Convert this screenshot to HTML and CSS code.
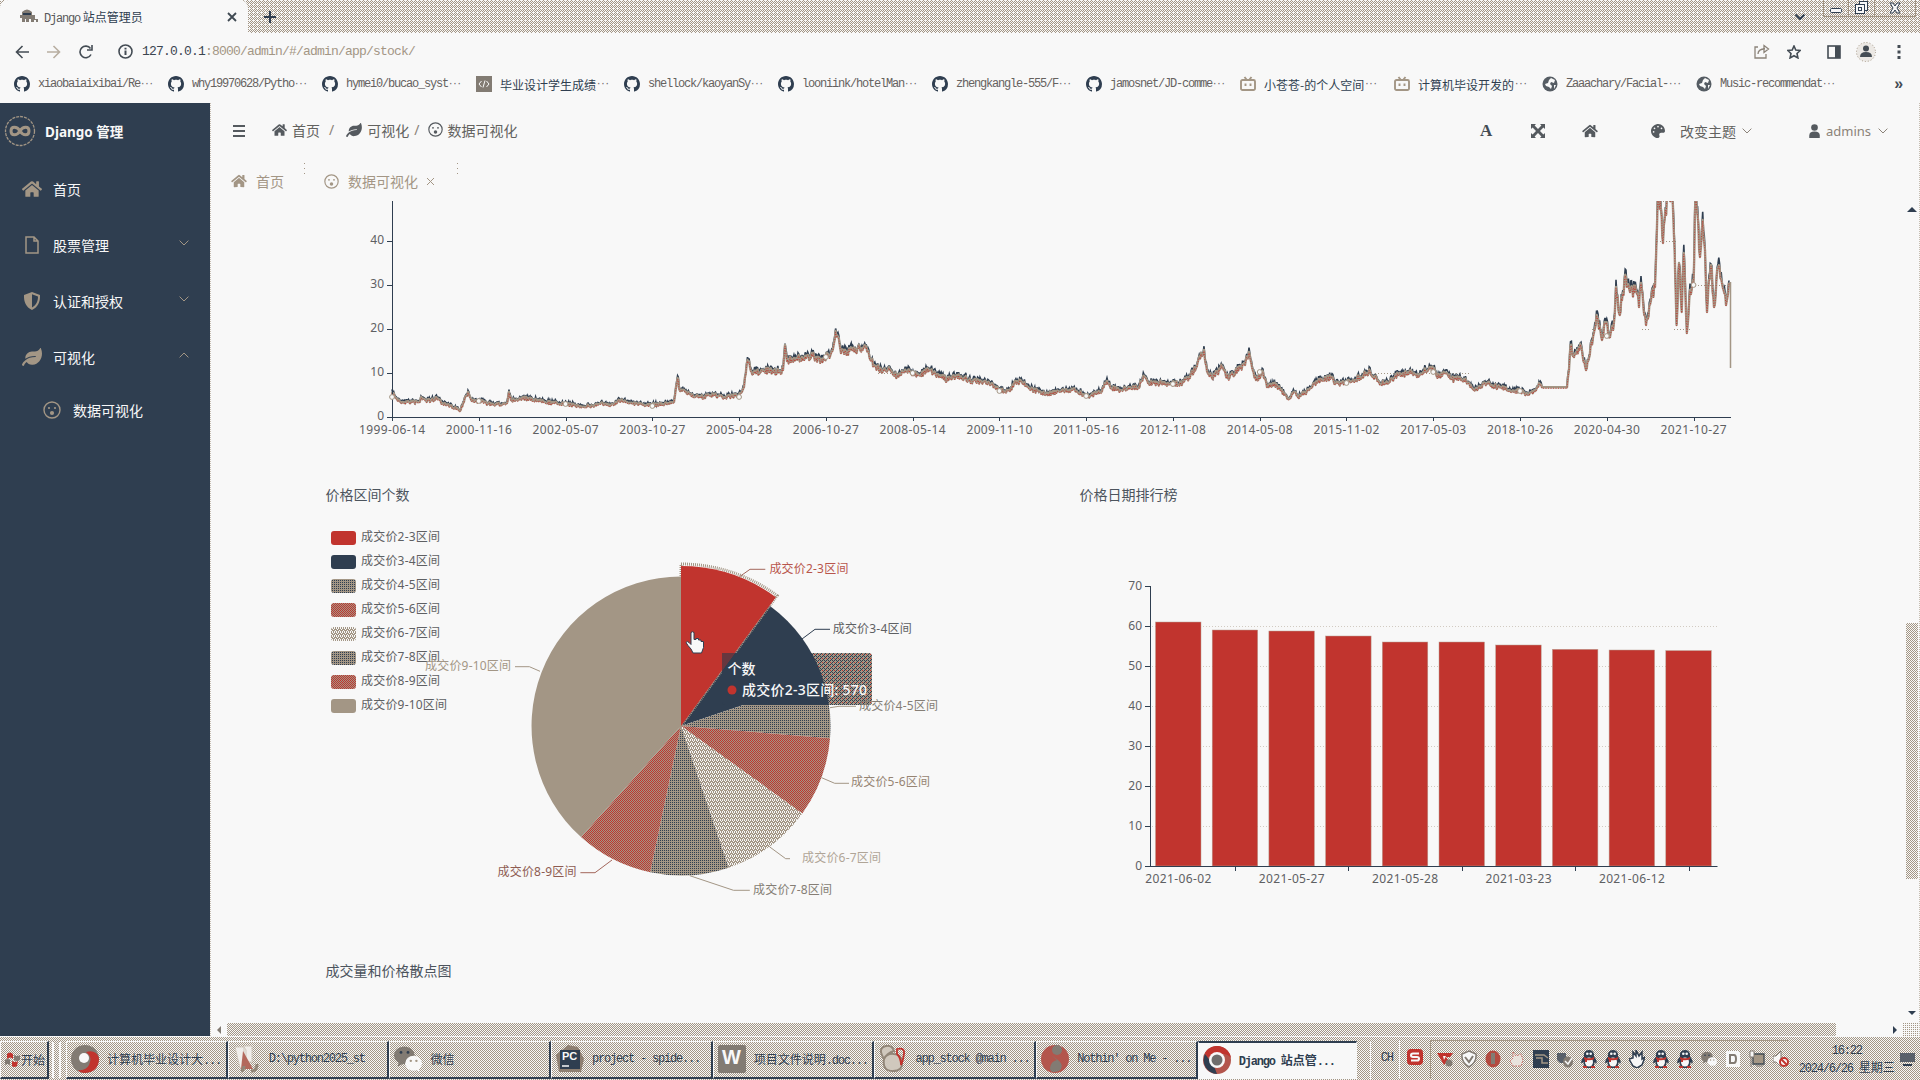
FILE: index.html
```html
<!DOCTYPE html>
<html lang="zh-CN">
<head>
<meta charset="utf-8">
<title>Django 站点管理员</title>
<link rel="stylesheet" href="styles.css">
</head>
<body>
<svg class="defs" width="0" height="0">
  <symbol id="home" viewBox="0 0 576 512"><path d="M280.37 148.26L96 300.11V464a16 16 0 0 0 16 16l112.06-.29a16 16 0 0 0 15.92-16V368a16 16 0 0 1 16-16h64a16 16 0 0 1 16 16v95.64a16 16 0 0 0 16 16.05L464 480a16 16 0 0 0 16-16V300L295.67 148.26a12.19 12.19 0 0 0-15.3 0zM571.6 251.47L488 182.56V44.05a12 12 0 0 0-12-12h-56a12 12 0 0 0-12 12v72.61L318.47 43a48 48 0 0 0-61 0L4.34 251.47a12 12 0 0 0-1.6 16.9l25.5 31A12 12 0 0 0 45.15 301l235.22-193.74a12.19 12.19 0 0 1 15.3 0L530.9 301a12 12 0 0 0 16.9-1.6l25.5-31a12 12 0 0 0-1.7-16.93z"/></symbol>
  <symbol id="leaf" viewBox="0 0 576 512"><path d="M546.2 9.7c-5.6-12.5-21.6-13-28.3-1.2C486.9 62.4 431.4 96 368 96h-80C182 96 96 182 96 288c0 7 .8 13.7 1.5 20.5C161.3 262.8 253.4 224 384 224c8.8 0 16 7.2 16 16s-7.2 16-16 16C132.6 256 26 410.1 2.4 468c-6.6 16.3 1.2 34.9 17.5 41.6 16.4 6.8 35-1.1 41.8-17.3 1.5-3.6 20.9-47.9 71.9-90.6 32.4 43.9 94 85.8 174.9 77.2C465.5 467.5 576 326.7 576 154.3c0-50.2-10.8-102.2-29.8-144.6z"/></symbol>
  <symbol id="palette" viewBox="0 0 512 512"><path d="M204.3 5C104.9 24.4 24.8 104.3 5.2 203.4c-37 187 131.7 326.4 258.8 306.7 41.2-6.4 61.4-54.6 42.5-91.7-23.1-45.4 9.9-98.4 60.9-98.4h79.7c35.8 0 64.8-29.6 64.9-65.3C511.5 97.1 368.1-26.9 204.3 5zM96 320c-17.7 0-32-14.3-32-32s14.3-32 32-32 32 14.3 32 32-14.3 32-32 32zm32-128c-17.7 0-32-14.3-32-32s14.3-32 32-32 32 14.3 32 32-14.3 32-32 32zm128-64c-17.7 0-32-14.3-32-32s14.3-32 32-32 32 14.3 32 32-14.3 32-32 32zm128 64c-17.7 0-32-14.3-32-32s14.3-32 32-32 32 14.3 32 32-14.3 32-32 32z"/></symbol>
  <symbol id="face" viewBox="0 0 18 18"><circle cx="9" cy="9" r="8" fill="none" stroke="currentColor" stroke-width="1.4"/><circle cx="6" cy="7" r="1.1"/><circle cx="12" cy="7" r="1.1"/><circle cx="9" cy="12" r="2.1"/></symbol>
  <symbol id="file" viewBox="0 0 14 18"><path d="M1 1h8l4 4v12H1zM9 1v4h4" fill="none" stroke="currentColor" stroke-width="1.5"/></symbol>
  <symbol id="shield" viewBox="0 0 18 18"><path fill-rule="evenodd" d="M9 0l8 3c.3 7-2 12-8 15C3 15 .7 10 1 3zM9 2.3v13.2c4.2-2.2 6-6 6-11z"/></symbol>
  <symbol id="down" viewBox="0 0 10 6"><path d="M.6 .6L5 5L9.4 .6" fill="none" stroke="currentColor"/></symbol>
  <symbol id="up" viewBox="0 0 10 6"><path d="M.6 5.4L5 1L9.4 5.4" fill="none" stroke="currentColor"/></symbol>
  <symbol id="github" viewBox="0 0 16 16"><path d="M8 0C3.58 0 0 3.58 0 8c0 3.54 2.29 6.53 5.47 7.59.4.07.55-.17.55-.38 0-.19-.01-.82-.01-1.49-2.01.37-2.53-.49-2.69-.94-.09-.23-.48-.94-.82-1.13-.28-.15-.68-.52-.01-.53.63-.01 1.08.58 1.23.82.72 1.21 1.87.87 2.33.66.07-.52.28-.87.51-1.07-1.78-.2-3.64-.89-3.64-3.95 0-.87.31-1.59.82-2.15-.08-.2-.36-1.02.08-2.12 0 0 .67-.21 2.2.82.64-.18 1.32-.27 2-.27s1.36.09 2 .27c1.53-1.04 2.2-.82 2.2-.82.44 1.1.16 1.92.08 2.12.51.56.82 1.27.82 2.15 0 3.07-1.87 3.75-3.65 3.95.29.25.54.73.54 1.48 0 1.07-.01 1.93-.01 2.2 0 .21.15.46.55.38A8.01 8.01 0 0 0 16 8c0-4.42-3.58-8-8-8z"/></symbol>
  <symbol id="bili" viewBox="0 0 16 16"><path d="M4.5 1l2 2.5m5-2.5l-2 2.500M2.500 4h11A1.500 1.500 0 0 1 15 5.500v7a1.500 1.500 0 0 1-1.500 1.500h-11A1.500 1.500 0 0 1 1 12.500v-7A1.500 1.500 0 0 1 2.500 4zM5.500 7.500v2.500m5-2.500v2.500" fill="none" stroke="#a39685" stroke-width="1.900"/></symbol>
  <symbol id="globe" viewBox="0 0 16 16"><circle cx="8" cy="8" r="7.500" fill="#555c63"/><path d="M9 2l4 2-1 3-3-1-1 2 2 2-1 3-2-2-3-1-1-2 3-1 1-3zM12 9l2 0-2 4z" fill="#f8f8f8"/></symbol>
  <symbol id="code" viewBox="0 0 16 16"><path d="M0 0h16v16H0z" fill="#827b73"/><path d="M5.500 5L3 8l2.500 3M10.500 5L13 8l-2.500 3M9 4.500l-2 7" fill="none" stroke="#f8f8f8"/></symbol>
  <symbol id="user" viewBox="0 0 14 16"><circle cx="7" cy="4" r="3.800"/><path d="M1 16v-3c0-3 2-4.500 6-4.500s6 1.500 6 4.500v3z"/></symbol>
  <symbol id="qq" viewBox="0 0 16 18"><path d="M8 0c4 0 5.500 3 5 6.500 3 3.500 3 6 2.400 7L13.500 12c0 3-1 4-1 4l1 2h-11l1-2s-1-1-1-4L.6 13.500C0 12.500 0 10 3 6.500 2.500 3 4 0 8 0z" fill="#2f3e50"/><ellipse cx="8" cy="12" rx="4" ry="4.500" fill="#f8f8f8"/><circle cx="6.300" cy="3.800" r="1.300" fill="#f8f8f8"/><circle cx="9.700" cy="3.800" r="1.300" fill="#f8f8f8"/><path d="M3 7q5 2.500 10 0v2.200q-5 2.300-10 0zM4 9h2v3H4zM2 16h4v2H2zM10 16h4v2h-4z" fill="#c1342e"/></symbol>
  <symbol id="wechat" viewBox="0 0 30 28"><ellipse cx="11" cy="10" rx="11" ry="9.500" fill="#827b73"/><circle cx="7.500" cy="7" r="1.500" fill="#2f3e50"/><circle cx="15" cy="7" r="1.500" fill="#2f3e50"/><path d="M5 17l-1 5 6-3" fill="#827b73"/><ellipse cx="21" cy="18.500" rx="9" ry="8" fill="#f8f8f8"/><circle cx="18" cy="16" r="1.300" fill="#a39685"/><circle cx="24" cy="16" r="1.300" fill="#a39685"/><path d="M24 25l3 3v-5" fill="#f8f8f8"/></symbol>
</svg>

<header class="tabstrip">
  <div class="browser-tab">
    <svg width="18" height="16" viewBox="0 0 18 16"><path d="M2 3q5-5 10 0v3h3v4h3v3h-2v-2h-2v2h-3v-3H9v3H6v-3H5v3H2V9H0V6h2z" fill="#827b73"/><path d="M3 4h8v2H3z" fill="#2f3e50"/></svg>
    <span class="song"><i>Django</i> 站点管理员</span>
    <svg class="tab-x" width="10" height="10" viewBox="0 0 10 10"><path d="M1 1l8 8M9 1L1 9" stroke="#3f4952" stroke-width="1.800"/></svg>
  </div>
  <svg class="plus" width="12" height="12" viewBox="0 0 12 12"><path d="M6 0v12M0 6h12" stroke="#2f3e50" stroke-width="2"/></svg>
  <svg class="tab-menu" width="10" height="6"><use href="#down" stroke-width="2"/></svg>
  <div class="win"><span><svg width="12" height="10"><rect x=".5" y="5.500" width="11" height="4" rx="1"/></svg></span><span><svg width="14" height="14"><rect x="4.500" y=".5" width="8" height="9"/><rect x=".5" y="3.500" width="9" height="9"/><rect x="3.500" y="6.500" width="3" height="3"/></svg></span><span><svg width="12" height="12"><path d="M1 1h3l2 3 2-3h3L8 6l3 5H8L6 8l-2 3H1l3-5z"/></svg></span></div>
</header>

<div class="urlbar">
  <svg width="14" height="14" viewBox="0 0 14 14"><path d="M14 7H2M7.500 1L1.500 7l6 6"/></svg>
  <svg class="dim" width="14" height="14" viewBox="0 0 14 14"><path d="M0 7h12M6.500 1l6 6-6 6"/></svg>
  <svg width="14" height="14" viewBox="0 0 14 14"><path d="M12 9.500A5.800 5.800 0 1 1 11.500 3.500M13 0v5H8"/></svg>
  <svg class="info" width="15" height="15" viewBox="0 0 15 15"><circle cx="7.500" cy="7.500" r="6.500"/><path d="M7.500 6.500V11M7.500 3.800v1.600" stroke-width="2"/></svg>
  <span class="url"><b>127.0.0.1</b>:8000/admin/#/admin/app/stock/</span>
  <div class="tools">
    <svg class="dim2" width="16" height="15" viewBox="0 0 16 15"><path d="M4 3H1v11h11v-4M4 10q0-5 7-5M10 1.500L14.500 5 10 8.500z"/></svg>
    <svg width="14" height="14" viewBox="0 0 14 14"><path d="M7 1l1.800 4 4.400.5L10 8.500l.9 4.400L7 10.700l-3.900 2.200L4 8.500.8 5.500 5.200 5z"/></svg>
    <svg class="panel" width="14" height="14" viewBox="0 0 14 14"><rect x="1" y="1" width="12" height="12"/><path d="M10.500 1v12" stroke-width="5"/></svg>
    <svg class="avatar" width="20" height="20" viewBox="0 0 20 20"><circle cx="10" cy="10" r="9.500" class="halo"/><circle cx="10" cy="6.500" r="3" class="fill"/><path d="M4 15q0-5 6-5t6 5z" class="fill"/></svg>
    <svg width="4" height="14" viewBox="0 0 4 14"><path d="M.5 0h3v3h-3zM.5 5.500h3v3h-3zM.5 11h3v3h-3z" class="fill"/></svg>
  </div>
</div>

<nav class="bookmarks">
  <a><svg><use href="#github"/></svg>xiaobaiaixibai/Re<em>···</em></a>
  <a><svg><use href="#github"/></svg>why19970628/Pytho<em>···</em></a>
  <a><svg><use href="#github"/></svg>hymei0/bucao_syst<em>···</em></a>
  <a class="short"><svg><use href="#code"/></svg><span class="zh">毕业设计学生成绩</span><em>···</em></a>
  <a><svg><use href="#github"/></svg>shellock/kaoyanSy<em>···</em></a>
  <a><svg><use href="#github"/></svg>looniink/hotelMan<em>···</em></a>
  <a><svg><use href="#github"/></svg>zhengkangle-555/F<em>···</em></a>
  <a><svg><use href="#github"/></svg>jamosnet/JD-comme<em>···</em></a>
  <a><svg><use href="#bili"/></svg><span class="zh">小苍苍-的个人空间</span><em>···</em></a>
  <a class="short"><svg><use href="#bili"/></svg><span class="zh">计算机毕设开发的</span><em>···</em></a>
  <a><svg><use href="#globe"/></svg>Zaaachary/Facial-<em>···</em></a>
  <a><svg><use href="#globe"/></svg>Music-recommendat<em>···</em></a>
  <b class="more">»</b>
</nav>

<div class="page">
  <aside>
    <div class="brand"><svg width="32" height="32" viewBox="0 0 32 32"><circle cx="16" cy="16" r="14.500" stroke-dasharray="3 1"/><path d="M16 16c-3-5-9-5-9 0s6 5 9 0 9-5 9 0-6 5-9 0z" stroke-width="3"/></svg>Django 管理</div>
    <a><svg width="20" height="18"><use href="#home"/></svg>首页</a>
    <a><svg width="20" height="18"><use href="#file"/></svg>股票管理<svg class="arrow"><use href="#down"/></svg></a>
    <a><svg width="20" height="18"><use href="#shield"/></svg>认证和授权<svg class="arrow"><use href="#down"/></svg></a>
    <a><svg width="20" height="18"><use href="#leaf"/></svg>可视化<svg class="arrow"><use href="#up"/></svg></a>
    <a class="sub"><svg width="18" height="18"><use href="#face"/></svg>数据可视化</a>
  </aside>
  <main>
    <div class="topbar">
      <svg class="burger" width="12" height="12" viewBox="0 0 12 12"><path d="M0 1h12M0 6h12M0 11h12" stroke="#555a5f" stroke-width="2"/></svg>
      <div class="crumbs"><svg width="15" height="14"><use href="#home"/></svg><span>首页</span><i>/</i><svg width="16" height="14"><use href="#leaf"/></svg><span>可视化</span><i class="tight">/</i><svg width="15" height="15"><use href="#face"/></svg><span class="last">数据可视化</span></div>
      <div class="actions">
        <b class="letter">A</b>
        <svg width="14" height="14" viewBox="0 0 14 14"><path d="M0 0h5L3.600 1.600 7 5l3.400-3.400L9 0h5v5l-1.600-1.400L9 7l3.400 3.400L14 9v5H9l1.400-1.600L7 9l-3.400 3.400L5 14H0V9l1.600 1.400L5 7 1.600 3.600 0 5z"/></svg>
        <svg width="16" height="14"><use href="#home"/></svg>
        <svg class="pal" width="14" height="14"><use href="#palette"/></svg><span class="theme">改变主题</span><svg class="chev" width="10" height="6"><use href="#down"/></svg>
        <svg class="usr" width="13" height="14"><use href="#user"/></svg><span class="name">admins</span><svg class="chev" width="10" height="6"><use href="#down"/></svg>
      </div>
    </div>
    <div class="tabs">
      <a><svg width="16" height="14"><use href="#home"/></svg>首页</a>
      <a class="second"><svg width="15" height="15"><use href="#face"/></svg>数据可视化<svg width="7" height="7" viewBox="0 0 7 7"><path d="M0 0l7 7M7 0L0 7" stroke="#a39685"/></svg></a>
    </div>
    <div class="body">
      <div class="charts">
        <svg id="line" class="chart" width="1694" height="259" viewBox="210 201 1694 259"></svg>
        <div class="pair">
          <section class="pie-box">
            <h3>价格区间个数</h3>
            <svg id="pie" class="chart" width="754" height="420" viewBox="210 520 754 420">
              <defs>
                <pattern id="tanNavy" width="4" height="2" patternUnits="userSpaceOnUse"><path d="M0 0h4v2H0z" fill="#a39685"/><path d="M0 0h1v1H0zM2 0h1v1H2z" fill="#2f3e50"/></pattern>
                <pattern id="redTan" width="2" height="2" patternUnits="userSpaceOnUse"><path d="M0 0h2v2H0z" fill="#a39685"/><path d="M0 0h1v1H0zM1 1h1v1H1z" fill="#c1342e"/></pattern>
                <pattern id="tanWhite" width="4" height="4" patternUnits="userSpaceOnUse"><path d="M0 0h4v4H0z" fill="#a39685"/><path d="M0 0h1v1H0zM2 0h1v1H2zM1 1h1v1H1zM3 2h1v1H3zM0 3h1v1H0zM2 3h1v1H2z" fill="#f8f8f8"/></pattern>
                <pattern id="shade" width="4" height="4" patternUnits="userSpaceOnUse"><path d="M0 0h4v4H0z" fill="#a39685"/><path d="M0 0h1v1H0zM2 0h1v1H2zM1 1h1v1H1zM0 2h1v1H0zM3 3h1v1H3z" fill="#2f3e50"/><path d="M2 2h1v1H2z" fill="#c1342e"/></pattern>
                <clipPath id="disc"><circle cx="681" cy="726" r="149.500"/></clipPath>
              </defs>
            </svg>
          </section>
          <section class="bar-box">
            <h3>价格日期排行榜</h3>
            <svg id="bars" class="chart" width="940" height="420" viewBox="964 520 940 420"></svg>
          </section>
        </div>
        <h3 class="scatter">成交量和价格散点图</h3>
      </div>
      <div class="vscroll"><i class="tri-up"></i><div class="vthumb dither"></div><i class="tri-down"></i></div>
    </div>
    <div class="hscroll"><i class="tri-left"></i><div class="hthumb dither"></div><i class="tri-right"></i><div class="corner"></div></div>
  </main>
</div>

<footer class="taskbar dither">
  <div class="start"><svg width="15" height="16" viewBox="0 0 15 16"><path d="M2 3q3-3 6 0v5q-3-3-6 0z" fill="#c1342e"/><path d="M9 4q3 2 6 0v5q-3 2-6 0zM0 9q3-2 5 0v5q-3-2-5 0z" fill="#827b73"/><path d="M7 10q3 2 6 0l-1 5q-3 2-5 0z" fill="#c1342e"/></svg><span class="zh">开始</span></div>
  <div class="grip"></div>
  <div class="tasks">
    <a><svg width="28" height="28" viewBox="0 0 28 28"><circle cx="14" cy="14" r="14" fill="#827b73"/><path d="M15 7Q25 4 28 13q0 14-14 15-5 0-7-3 8 1 11-5 4-8-3-13z" fill="#c1342e"/><circle cx="13" cy="13" r="5" fill="#f8f8f8"/></svg><span><em class="zh">计算机毕业设计大</em>...</span></a>
    <a><svg width="28" height="28" viewBox="0 0 28 28"><path d="M2 2h9l2 3v18H7zM11 1h8v16h-8z" fill="#f0eeeb" stroke="#cfc7bd"/><path d="M10 6l10 18H8z" fill="#b3685c"/><path d="M8 26q3-1 3-5m7 5q6 0 6-7" fill="none" stroke="#928678" stroke-width="3"/></svg><span>D:\python2025_st</span></a>
    <a><svg width="30" height="28"><use href="#wechat"/></svg><span><em class="zh">微信</em></span></a>
    <a><svg width="28" height="28" viewBox="0 0 28 28"><path d="M12 0l10 2 6 12-3 13H3L0 10z" fill="#8e7f71"/><path d="M4 5h20v19H4z" fill="#2f3e50"/><text x="6" y="15" class="pc">PC</text><path d="M6 21h7" stroke="#f8f8f8" stroke-width="1.500"/></svg><span>project - spide...</span></a>
    <a><svg width="28" height="28" viewBox="0 0 28 28"><rect width="28" height="28" rx="2" fill="#827b73"/><text x="4" y="19" class="w">W</text></svg><span><em class="zh">项目文件说明</em>.doc...</span></a>
    <a><svg width="28" height="28" viewBox="0 0 28 28"><path d="M5 14Q-2 3 7 1q6-1 8 5-7 2-10 8zM5 14q-2 12 9 12 10 0 9-9-1-8-8-8-7-1-10 5z" fill="#d0c8bd" stroke="#928678" stroke-width="2"/><path d="M18 4q8-2 7 5t-3 11q0-7-4-11z" fill="none" stroke="#c1342e" stroke-width="1.800"/></svg><span>app_stock @main ...</span></a>
    <a><svg width="28" height="28" viewBox="0 0 28 28"><circle cx="14" cy="14" r="14" fill="#b3554c"/><circle cx="16" cy="5" r="5" fill="#827b73"/><path d="M10 10l7 5q7 6 1 11-9 3-9-3 1-7 7-8z" fill="#827b73"/></svg><span>Nothin' on Me - ...</span></a>
    <a class="current"><svg width="28" height="28" viewBox="0 0 28 28"><circle cx="14" cy="14" r="14" fill="#b3554c"/><path d="M2 7A14 14 0 0 1 28 12q-4-5-13-4T4 12z" fill="#c1342e"/><path d="M2 8l9 12 3 8A14 14 0 0 1 2 8z" fill="#2f3e50"/><circle cx="14" cy="14" r="8" fill="#f8f8f8"/><circle cx="14" cy="14" r="5.500" fill="#6f6d6c"/></svg><span>Django <em class="zh">站点管</em>...</span></a>
  </div>
  <div class="lang">CH</div>
  <svg class="sogou" width="16" height="16" viewBox="0 0 16 16"><rect width="16" height="16" rx="4" fill="#c1342e"/><path d="M12 4.500H6q-2 0-2 1.700T6 8h4q2 0 2 1.800t-2 1.700H4" fill="none" stroke="#f8f8f8" stroke-width="2"/></svg>
  <div class="tray">
    <svg viewBox="0 0 16 18"><path d="M0 3h16l-3 4H9l2 3-4 5z" fill="#c1342e"/><path d="M6 6h3l-2 4z" fill="#f8f8f8"/><circle cx="12" cy="13" r="3.500" fill="#827b73"/></svg>
    <svg viewBox="0 0 16 18"><path d="M8 1l7 3q1 8-7 13Q0 12 1 4z" fill="#f8f8f8" stroke="#827b73" stroke-width="1.500"/><path d="M4 7l4 5 4-6" fill="none" stroke="#827b73" stroke-width="2"/></svg>
    <svg viewBox="0 0 16 18"><ellipse cx="8" cy="9" rx="7.500" ry="8.500" fill="#b34a40"/><path d="M6 3h4v11H6z" fill="#827b73"/></svg>
    <svg viewBox="0 0 16 18"><path d="M4 2l3 4 5-2 2 6-2 6H4l-3-5 3-3z" fill="#e8e3dd" stroke="#c9766c" stroke-dasharray="2 1"/></svg>
    <svg viewBox="0 0 16 18"><path d="M0 0h16v18H0z" fill="#2f3e50"/><path d="M2 5h9l4 3M3 8h6v5h6" fill="none" stroke="#a39685" stroke-width="1.500"/></svg>
    <svg viewBox="0 0 16 18"><path d="M0 3h9v10H3L0 10z" fill="#59606a"/><ellipse cx="11" cy="12" rx="5" ry="5.500" fill="#827b73"/><path d="M8 11l3 3 4-6" fill="none" stroke="#f8f8f8" stroke-width="1.500"/></svg>
    <svg><use href="#qq"/></svg>
    <svg><use href="#qq"/></svg>
    <svg viewBox="0 0 16 18"><path d="M4 8V2l3 4V0l3 6 3-4v7l3-2-3 8-5 3-4-2-4-7z" fill="#f8f8f8" stroke="#2f3e50" stroke-width="1.500"/></svg>
    <svg><use href="#qq"/></svg>
    <svg><use href="#qq"/></svg>
    <svg viewBox="0 0 30 28"><use href="#wechat"/></svg>
    <svg viewBox="0 0 16 18"><path d="M1 1h12l2 2v14H1z" fill="#f8f8f8"/><path d="M5 5h4q2 0 2 4t-2 4H5z" fill="none" stroke="#827b73" stroke-width="2"/></svg>
    <svg viewBox="0 0 16 18"><path d="M4 4h11v10H4z" fill="#a39685" stroke="#3f4952" stroke-width="1.300"/><path d="M1 1h4v6H1zM2 7v10M7 16h7" fill="#f8f8f8" stroke="#827b73"/></svg>
    <svg viewBox="0 0 16 18"><path d="M0 6h3l5-5v16l-5-5H0z" fill="#f8f8f8" stroke="#827b73"/><circle cx="11" cy="12" r="4" fill="#f8f8f8" stroke="#c1342e" stroke-width="2"/><path d="M8 9l6 6" stroke="#c1342e" stroke-width="2"/></svg>
  </div>
  <div class="clock"><span>16:22</span><span>2024/6/26 <em class="zh">星期三</em></span></div>
  <svg class="desk" width="15" height="13" viewBox="0 0 15 13"><path d="M0 0h15v9H0z" fill="#59606a"/><path d="M3 11h9v2H3z" fill="#2f3e50"/></svg>
</footer>
<script src="charts.js"></script>
</body>
</html>
```
FILE: styles.css
```css
* { box-sizing: border-box; }
body { margin: 0; width: 1920px; height: 1080px; overflow: hidden; background: #f8f8f8; color: #4c545d; font: 14px "Noto Sans", "Noto Sans CJK SC", sans-serif; display: flex; flex-direction: column; }
svg { flex: none; display: block; fill: currentColor; }
.defs { position: absolute; }
i, em { font-style: normal; }
.dither { background: conic-gradient(#a39685 25%, #f8f8f8 0 50%, #a39685 0 75%, #f8f8f8 0) 0 0 / 2px 2px; }
.tabstrip { background: conic-gradient(at 1px 1px, transparent 75%, #f8f8f8 0) 1px 0 / 4px 4px, conic-gradient(#a39685 25%, #f8f8f8 0 50%, #a39685 0 75%, #f8f8f8 0) 0 0 / 2px 2px; }
.zh, .song { font: 12px "Noto Sans CJK SC", sans-serif; letter-spacing: 0; color: #2f3e50; }

.tabstrip { height: 33px; display: flex; align-items: center; flex: none; }
.browser-tab { width: 248px; height: 33px; background: #f8f8f8; border-radius: 8px 8px 0 0; padding: 0 11px 0 20px; display: flex; align-items: center; gap: 6px; }
.browser-tab .song i { font: 12px "Liberation Mono", monospace; letter-spacing: -1.2px; color: #59585a; }
.tab-x { margin-left: auto; }
.plus { margin-left: 16px; }
.tab-menu { margin-left: auto; color: #2f3e50; }
.win { align-self: flex-start; display: flex; width: 93px; height: 17px; margin: 0 4px 0 18px; border: 1px solid #a39685; border-top: 0; }
.win span { flex: 25; display: grid; place-items: center; border-right: 1px solid #a39685; }
.win span:last-child { flex: 41; border: 0; }
.win svg { fill: #f8f8f8; stroke: #2f3e50; }

.urlbar { height: 37px; flex: none; display: flex; align-items: center; padding: 0 19px 0 15px; gap: 18px; }
.urlbar svg { fill: none; stroke: #444c54; stroke-width: 1.6; }
.urlbar .dim { stroke: #b8aea1; }
.urlbar .dim2 { stroke: #8b8379; stroke-width: 1.3; }
.urlbar .info { margin-left: 7px; }
.url { margin-left: -9px; font: 13px "Liberation Mono", monospace; letter-spacing: -.8px; color: #a39685; }
.url b { font-weight: 400; color: #3c4650; }
.tools { margin-left: auto; display: flex; align-items: center; gap: 17px; }
.tools .panel { margin-left: 9px; margin-right: -2px; }
.tools .avatar { margin-right: 4px; }
.tools .halo { stroke: #a39685; stroke-width: 1; stroke-dasharray: 1 2; fill: #ebe8e4; }
.tools .fill { fill: #444c54; stroke: none; }

.bookmarks { height: 33px; flex: none; display: flex; align-items: center; padding: 0 18px 5px 14px; font: 12px "Liberation Mono", monospace; letter-spacing: -1.2px; color: #66625f; }
.bookmarks a { width: 154px; flex: none; display: flex; align-items: center; white-space: nowrap; }
.bookmarks .short { width: 148px; }
.bookmarks svg { width: 16px; height: 16px; margin-right: 8px; fill: #2f3e50; }
.bookmarks em { font-size: 9px; }
.more { margin-left: auto; font: bold 16px/16px "Liberation Sans", sans-serif; color: #444c54; }

.page { height: 933px; flex: none; display: flex; }
aside { width: 210px; background: #2f3e50; color: #f8f8f8; flex: none; }
aside svg { color: #a39685; }
.brand { height: 58px; padding: 0 0 2px 4px; display: flex; align-items: center; gap: 9px; font-weight: 700; font-size: 13.5px; }
.brand svg { fill: none; stroke: #a39685; stroke-width: 1.3; }
aside a { height: 56px; padding: 0 21px 0 22px; display: flex; align-items: center; gap: 11px; }
aside .arrow { width: 10px; height: 6px; margin: -4px 0 0 auto; }
aside .sub { height: 50px; padding-left: 43px; gap: 12px; }

main { width: 1710px; flex: none; border-left: 1px dotted #c6bdb1; border-right: 1px dotted #c6bdb1; }
.topbar { height: 57px; display: flex; align-items: center; padding: 0 31px 1px 22px; color: #62625f; }
.topbar svg { color: #555a5f; }
.burger { margin-right: 27px; }
.crumbs { display: flex; align-items: center; padding-bottom: 3px; }
.crumbs span { margin-left: 5px; }
.crumbs i { margin: 0 12px 0 9px; color: #8b8379; }
.crumbs .tight { margin: 0 9px 0 5px; }
.crumbs .last { margin-left: 4px; }
.actions { margin-left: auto; display: flex; align-items: center; }
.letter { width: 12px; margin-right: 39px; font: bold 17px "Liberation Serif", serif; color: #444c54; }
.actions svg + svg { margin-left: 37px; }
.actions svg.pal { margin-left: 53px; }
.theme { margin: 0 6px 0 15px; }
.actions svg.chev { margin: 0; color: #8b8379; }
.actions svg.usr { margin-left: 56px; }
.name { margin: 0 7px 0 5px; font-size: 13px; color: #8b8379; }
.tabs { height: 41px; display: flex; padding-left: 20px; color: #a39685; }
.tabs a { width: 74px; height: 41px; padding-top: 1px; display: flex; align-items: center; gap: 9px; background: linear-gradient(#a39685 1px, transparent 1px 5px, #a39685 5px 6px, transparent 6px 10px, #a39685 10px 11px, transparent 11px) right 3px / 1px 12px no-repeat; }
.tabs .second { width: 153px; padding-left: 19px; }

.body { height: 822px; display: flex; margin-left: -1px; }
.charts { width: 1694px; flex: none; }
.pair { display: flex; height: 480px; }
h3 { margin: 0; height: 60px; padding: 5px 0 0 115.500px; font-size: 14px; font-weight: 400; line-height: 60px; color: #4c545d; }
.scatter { height: 62px; padding-top: 0; line-height: 62px; }
.chart text { font: 12px "Noto Sans", "Noto Sans CJK SC", sans-serif; fill: #5e6063; }
.chart text.tip { font-size: 14px; font-weight: 500; fill: #f8f8f8; }
.vscroll { width: 16px; display: flex; flex-direction: column; align-items: center; padding: 6px 0 8px; }
.vthumb { width: 12px; height: 256px; margin: 411px 0 auto; }
.tri-up { border: 5px solid transparent; border-top: 0; border-bottom-color: #2f3e50; }
.tri-down { border: 4px solid transparent; border-bottom: 0; border-top-color: #2f3e50; }
.hscroll { height: 13px; display: flex; align-items: center; padding: 0 0 0 6px; }
.hthumb { width: 1609px; height: 13px; margin: 0 auto 0 6px; }
.tri-left { border: 4px solid transparent; border-left: 0; border-right-color: #827b73; }
.tri-right { border: 4px solid transparent; border-right: 0; border-left-color: #2f3e50; }
.corner { width: 16px; height: 13px; margin-left: 6px; background: conic-gradient(at 1px 1px, transparent 75%, #a39685 0) 0 0 / 2px 2px; }

.taskbar { height: 44px; flex: none; display: flex; align-items: center; padding-top: 2px; border-top: 1px solid #f8f8f8; font: 12px "Liberation Mono", monospace; letter-spacing: -1.2px; color: #2f3e50; white-space: nowrap; }
.start { width: 49px; height: 38px; padding-left: 4px; display: flex; align-items: center; gap: 1px; }
.start, .tasks a { border: 1px solid #f8f8f8; border-right: 2px solid #2f3e50; border-bottom: 2px solid #2f3e50; }
.grip { width: 9px; height: 36px; margin: 0 5px 0 3px; border: 1px solid #f8f8f8; border-width: 0 2px; }
.tasks { display: flex; }
.tasks a { width: 161.7px; height: 38px; padding: 0 4px; display: flex; align-items: center; gap: 8px; overflow: hidden; }
.tasks svg { width: 28px; }
.tasks span { padding-bottom: 1px; }
.tasks .current { width: 159px; background: #f8f8f8; border: 1px solid #f8f8f8; border-top: 2px solid #2f3e50; font-weight: 700; }
.current .zh { font-weight: 700; }
.pc { font: bold 11px "Liberation Sans", sans-serif; letter-spacing: 0; fill: #f8f8f8; }
.w { font: bold 20px "Liberation Sans", sans-serif; fill: #f8f8f8; }
.lang { margin-left: 13px; padding: 0 6px 4px 10px; height: 38px; display: flex; align-items: center; border: 1px solid #f8f8f8; border-width: 0 1px; }
.sogou { margin: 0 7px 6px 7px; }
.tray { height: 39px; border: 1px solid #a39685; border-width: 1px 0 0 1px; padding: 0 0 2px 6px; display: flex; gap: 8px; align-items: center; }
.tray svg { width: 16px; height: 18px; }
.clock { width: 96px; margin-left: 10px; display: flex; flex-direction: column; align-items: center; line-height: 16px; }
.clock .zh { line-height: 16px; }
.desk { margin-left: 5px; }
```
FILE: charts.js
```javascript
const NAVY = '#2f3e50', TAN = '#a39685', RED = '#c1342e', BG = '#f8f8f8';
const NS = 'http://www.w3.org/2000/svg';

function add(host, tag, attrs, text) {
  const el = document.createElementNS(NS, tag);
  for (const k in attrs) el.setAttribute(k, attrs[k]);
  if (text) el.textContent = text;
  host.appendChild(el);
  return el;
}

/* Price history: one x,y vertex per pair */
const line = document.getElementById('line');
const path = [392,392,397,399,402,402,419,402,421,397,426,401,438,398.5,443,404,457,408,460,411,463,403,468,392,472,401,479,401,494,405,507,403,509,392,511,400,523,398,545,402,564,404,579,406,593,406,601,403,610,406,621,400,632,403,651,405,671,403,674,402,677.6,378,679.6,390,690,394,701,397,714,395,724,397,739,395,744,387,747.5,360,750,367,753,374,763,370,777,372,783,370,785,345,787,361,794,358,806,358,814,356,821,361,831,353,834,343,835.6,331,838,337,841,353,852,350,862,348,864.7,345,869.6,358,874,365,883,371,889,367,897,377,906,371,913,373,918,375,930,370,947,380,957,375,969,380,991,384,1000,390,1010,391,1014,383,1022,382,1034,390,1046,394,1058,391,1075,390,1083,394,1090,396,1102,391,1107,381,1112,388,1121,390,1130,387,1138,388,1144,376,1148,383,1158,383,1171,383,1181,384,1189,377,1196,368,1201,353,1204,350,1207,371,1212,378,1222,367,1228,378,1240,368,1245,365,1249,352,1252,367,1256,380,1263,372,1267,387,1273,383,1281,390,1288,399,1295,392,1298,397,1309,390,1314,383,1332,377,1335,384,1347,382,1360,377,1370,371,1379,382,1385,383,1398,375,1411,373,1417,377,1431,367,1439,377,1446,373,1451,379,1464,379,1474,390,1485,383,1505,389,1520,391,1526,394,1536,390,1539,383,1542,387.3,1567,387.3,1569,370,1570.5,345,1574,357,1581,346,1586,370,1589,358,1593,337,1596.5,315,1602,340,1605,322,1610,337,1614,322,1616,287,1619,313,1622,300,1626,277,1630,292,1636,290,1639,307,1641,283,1646,325,1651,300,1655,287,1657.8,196,1661,210,1663,243,1667,195,1672,195,1674.6,250,1676.6,325,1679,263,1681.7,312,1683.8,253,1686.8,333,1690,290,1693.5,285,1695.5,195,1697.6,215,1700,257,1702.7,220,1705,250,1707,312,1709,280,1711,265,1714,307,1718,268,1722,283,1726,305,1729.7,282];

let seed = 7;
const rnd = () => (seed = (seed * 16807) % 2147483647) / 2147483647 - 0.5;
const close = [], high = [];
for (let i = 0; i < path.length - 2; i += 2) {
  const [x0, y0, x1, y1] = path.slice(i, i + 4);
  const n = Math.max(1, Math.round((x1 - x0) / 0.8));
  const flat = x0 === 1542;
  for (let k = 0; k < n; k++) {
    const x = x0 + (x1 - x0) * k / n, y = y0 + (y1 - y0) * k / n;
    const amp = flat ? 0 : 2 + Math.max(0, 417 - y) / 11;
    const yy = k ? y + rnd() * amp : y;
    close.push(x.toFixed(1) + ',' + yy.toFixed(1));
    high.push(x.toFixed(1) + ',' + (yy - (flat ? 0 : 0.5 + Math.abs(rnd()) * amp)).toFixed(1));
  }
}
for (let v = 1; v <= 4; v++) {
  const y = 417.5 - v * 44;
  add(line, 'path', { d: `M387 ${y}h6`, stroke: NAVY });
}
[[1657, 241.5, 20], [1657, 201.5, 18], [1692, 285.5, 36], [1592, 329.5, 14], [1642, 329.5, 8], [1674, 329.5, 16], [1375, 373.5, 95], [878, 373.5, 20]].forEach(([x, y, w]) =>
  add(line, 'path', { d: `M${x} ${y}h${w}`, stroke: TAN, 'stroke-dasharray': '1 2' }));
add(line, 'polyline', { points: high.join(' '), fill: 'none', stroke: NAVY, 'stroke-width': 1.6 });
add(line, 'polyline', { points: close.join(' '), fill: 'none', stroke: TAN, 'stroke-width': 2.4, 'stroke-linejoin': 'round' });
add(line, 'polyline', { points: close.join(' '), fill: 'none', stroke: RED, 'stroke-width': 0.9, 'stroke-dasharray': '1 1.5', transform: 'translate(0 1)' });
add(line, 'path', { d: 'M1730.5 282V368', stroke: TAN, 'stroke-width': 1.5 });
add(line, 'path', { d: 'M392.5 201V421M387 417.5H1731', stroke: NAVY, fill: 'none' });
['0', '10', '20', '30', '40'].forEach((t, i) =>
  add(line, 'text', { x: 384, y: 420 - i * 44, 'text-anchor': 'end' }, t));
const marks = [397, 401, 404, 406, 397, 357, 373, 391, 396, 384, 372, 383, 372, 391, 336, 285];
['1999-06-14', '2000-11-16', '2002-05-07', '2003-10-27', '2005-04-28', '2006-10-27', '2008-05-14', '2009-11-10', '2011-05-16', '2012-11-08', '2014-05-08', '2015-11-02', '2017-05-03', '2018-10-26', '2020-04-30', '2021-10-27'].forEach((t, i) => {
  const x = 392 + i * 86.77;
  add(line, 'path', { d: `M${Math.round(x) + 0.5} 417v4`, stroke: NAVY });
  add(line, 'circle', { cx: x, cy: marks[i], r: 2.4, fill: BG, stroke: TAN });
  add(line, 'text', { x: x - 33, y: 434, textLength: 66 }, t);
});

/* Pie of price ranges */
const pie = document.getElementById('pie');
const CX = 681, CY = 726;
const at = (deg, r) => {
  const a = deg * Math.PI / 180;
  return `${(CX + r * Math.sin(a)).toFixed(1)} ${(CY - r * Math.cos(a)).toFixed(1)}`;
};
const wedge = (a, b, r) => `M${CX} ${CY}L${at(a, r)}A${r} ${r} 0 0 1 ${at(b, r)}Z`;
const fills = [RED, NAVY, 'url(#tanNavy)', 'url(#redTan)', 'url(#tanWhite)', 'url(#tanNavy)', 'url(#redTan)', TAN];
const stops = [0, 36.4, 71.3, 94.7, 125.8, 161.4, 191.9, 222, 360];
const names = ['2-3', '3-4', '4-5', '5-6', '6-7', '7-8', '8-9', '9-10'].map(n => `成交价${n}区间`);

names.forEach((n, i) => {
  add(pie, 'rect', { x: 331, y: 531 + i * 24, width: 25, height: 14, rx: 3, fill: fills[i] });
  add(pie, 'text', { x: 361, y: 541 + i * 24, textLength: i === 7 ? 86 : 79 }, n);
});
add(pie, 'rect', { x: 722, y: 653, width: 150, height: 52, rx: 3, fill: 'url(#shade)' });
fills.forEach((f, i) => { if (i) add(pie, 'path', { d: wedge(stops[i], stops[i + 1], 149.5), fill: f }); });
add(pie, 'path', { d: wedge(0, 36.4, 162), fill: 'none', stroke: TAN, 'stroke-dasharray': '1 1', 'stroke-width': 3 });
add(pie, 'rect', { x: 722, y: 653, width: 150, height: 52, rx: 3, fill: NAVY, 'clip-path': 'url(#disc)' });
add(pie, 'path', { d: wedge(0, 36.4, 160), fill: RED });
add(pie, 'path', { d: 'M722 653h13l-13 18z', fill: '#67373f' });

[['739.6,576.7 750,569.3 765.3,569.3', 769.4, 573, '#b8564c', '#a3675c'],
 ['802,639 815,629.3 830,629.3', 832.7, 633, '#5e6063', NAVY],
 ['830,707.7 839,706.3 856,706.3', 859, 710, '#857e75', TAN],
 ['821.6,777.7 834.7,783.3 849,783.3', 851, 786, '#968473', TAN],
 ['769.4,846.7 785.7,858.7 790,858.7', 802, 862, '#b0a597', TAN],
 ['689.8,875.7 733.5,890.3 749.8,890.3', 753, 894, '#857e75', TAN],
 ['612,860 595,872.7 580.4,872.7', 497.5, 876, '#8e5c52', '#a3675c'],
 ['540,671.3 529.4,666.7 515,666.7', 425, 670, '#a39685', TAN]
].forEach(([pts, x, y, color, stroke], i) => {
  add(pie, 'polyline', { points: pts, fill: 'none', stroke });
  add(pie, 'text', { x, y, textLength: i === 7 ? 86 : 79, style: `fill:${color}` }, names[i]);
});
add(pie, 'text', { x: 727.5, y: 674, class: 'tip' }, '个数');
add(pie, 'circle', { cx: 732, cy: 690, r: 4.5, fill: RED });
add(pie, 'text', { x: 742, y: 695, class: 'tip', textLength: 125 }, '成交价2-3区间: 570');
add(pie, 'path', { d: 'M691 632.5q1.5-1.5 3 0v7h2v-1h2.5v1.5h2.5v1.5h2.5v6l-2 5.5h-8.5l-2-4-3-3.5-2-3q1-2 3 0l2 2z', fill: BG, stroke: NAVY });

/* Ranking bars */
const bars = document.getElementById('bars');
for (let v = 0; v <= 7; v++) {
  const y = 866.5 - v * 40;
  if (v && v < 7) add(bars, 'path', { d: `M1152 ${y}h565`, stroke: '#d2cbc2', 'stroke-dasharray': '1 2' });
  add(bars, 'path', { d: `M1145 ${y}h6`, stroke: NAVY });
  add(bars, 'text', { x: 1142, y: y + 3, 'text-anchor': 'end' }, v ? v * 10 : '0');
}
[622, 630, 631, 636, 642, 642, 645, 649.3, 650, 650.6].forEach((y, i) => {
  const x = 1155.5 + i * 56.7;
  add(bars, 'rect', { x, y, width: 45.5, height: 866 - y, fill: RED, stroke: '#b9a092', 'stroke-width': 0.5 });
  if (i % 2) add(bars, 'path', { d: `M${Math.round(x + 22.7) + 0.5} 866v5`, stroke: NAVY });
});
add(bars, 'path', { d: 'M1150.5 586V866.5H1717.5', fill: 'none', stroke: NAVY });
['2021-06-02', '2021-05-27', '2021-05-28', '2021-03-23', '2021-06-12'].forEach((t, i) =>
  add(bars, 'text', { x: 1145.3 + i * 113.4, y: 883, textLength: 66 }, t));
```
